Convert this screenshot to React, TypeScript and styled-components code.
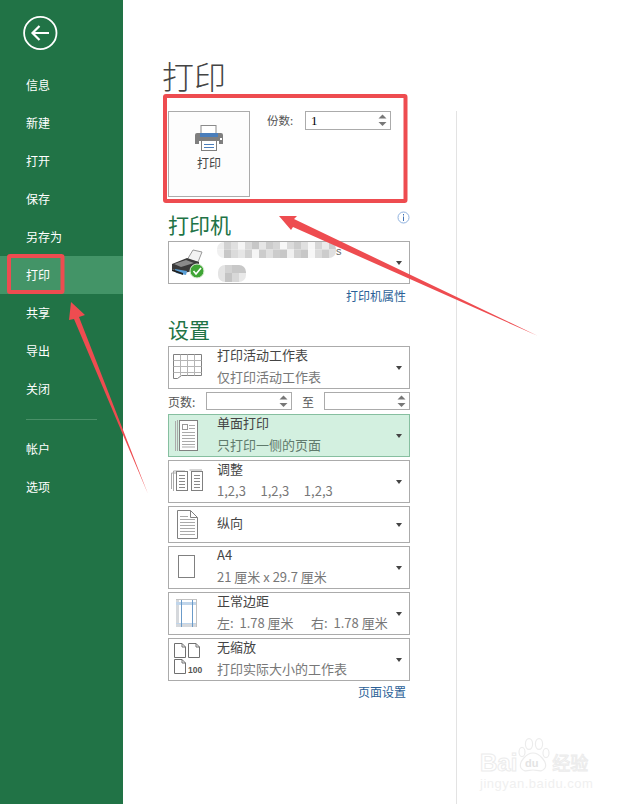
import React from "react";
import styled, { createGlobalStyle } from "styled-components";

const Global = createGlobalStyle`
  html, body { margin: 0; padding: 0; background: #fff; overflow: hidden; }
  body { font-family: "Noto Sans CJK SC", "Noto Sans", sans-serif; font-size: 12px; color: #444; }
  * { box-sizing: border-box; }
`;

const Page = styled.div`
  position: relative; width: 626px; height: 804px; display: flex; overflow: hidden; background: #fff;
`;
const Sidebar = styled.nav`
  width: 123px; height: 804px; background: #217346; flex: none; display: flex; flex-direction: column;
`;
const BackButton = styled.div`
  margin: 15px 0 15px 23px; width: 35px; height: 36px; display: flex; align-items: center; justify-content: center;
`;
const NavItem = styled.div<{ $active?: boolean }>`
  height: 38px; padding: 0 0 2px 26px; display: flex; align-items: center; color: #fff; font-size: 12px;
  background: ${(p) => (p.$active ? "#439467" : "transparent")};
`;
const NavDivider = styled.div`
  height: 1px; width: 71px; margin: 11px 0 10px 26px; background: #4a9068;
`;
const Column = styled.main`
  width: 242px; margin-left: 45px; flex: none; display: flex; flex-direction: column;
`;
const Title = styled.h1`
  margin: 51px 0 0 -6px; height: 60px; font-size: 32px; line-height: 48px; font-weight: 300; color: #444;
`;
const PrintRow = styled.section`
  display: flex; align-items: flex-start; height: 86px;
`;
const PrintButton = styled.div`
  width: 82px; height: 86px; border: 1px solid #ababab; background: #fdfdfd; display: flex; flex-direction: column; align-items: center; color: #444; font-size: 12px;
  padding-top: 13px; gap: 3px; line-height: 18px;
`;
const CopiesLabel = styled.span`
  margin-left: 17px; width: 38px; line-height: 19px; font-size: 11.5px; color: #555;
`;
const Spin = styled.div<{ $w: number; $h: number }>`
  position: relative; width: ${(p) => p.$w}px; height: ${(p) => p.$h}px; border: 1px solid #ababab; background: #fff; display: flex; align-items: center; padding-left: 5px;
  font-family: "Liberation Serif", serif; font-size: 13px; color: #000;
`;
const SpinArrows = styled.span`
  margin-left: auto; margin-right: 3px; display: flex;
`;
const HeadingRow = styled.div<{ $top: number }>`
  margin-top: ${(p) => p.$top}px; height: 30px; display: flex; justify-content: space-between; align-items: flex-start;
`;
const Heading = styled.h2`
  margin: -2px 0 0; font-size: 21px; line-height: 30px; font-weight: 400; color: #217346;
`;
const InfoMark = styled.span`
  margin-top: 0; display: flex;
`;
const Option = styled.div<{ $h?: number; $on?: boolean }>`
  flex: none; height: ${(p) => p.$h ?? 43}px; border: 1px solid ${(p) => (p.$on ? "#86bfa0" : "#ababab")}; background: ${(p) => (p.$on ? "#d3f0e0" : "#fff")};
  display: grid; grid-template-columns: 48px 1fr 20px; align-items: center;
`;
const IconCell = styled.div`
  display: flex; height: 100%; align-items: flex-start;
`;
const OptionText = styled.div`
  display: flex; flex-direction: column; justify-content: center; height: 100%; min-width: 0; white-space: pre;
`;
const OptionTitle = styled.div`
  font-size: 13px; line-height: 20px; height: 20px; margin-top: -4px; color: #444;
`;
const OptionSub = styled.div<{ $on?: boolean }>`
  font-size: 13px; line-height: 20px; height: 20px; margin-top: 2px; color: ${(p) => (p.$on ? "#5f7a6c" : "#777")};
`;
const Caret = styled.span`
  justify-self: start; margin-left: 7px; width: 0; height: 0; border-left: 3.5px solid transparent; border-right: 3.5px solid transparent; border-top: 4px solid #444;
`;
const LinkRow = styled.div<{ $h: number }>`
  height: ${(p) => p.$h}px; display: flex; align-items: center; justify-content: flex-end; padding: 0 4px 2px 0; font-size: 12px; color: #2b5f97;
`;
const PagesRow = styled.div`
  margin: 3px 0 4px; height: 18px; display: grid; grid-template-columns: 38px 86px 32px 86px; align-items: center; font-size: 12px; color: #555;
`;
const ToLabel = styled.span`
  text-align: center;
`;
const Stack = styled.div`
  display: flex; flex-direction: column; gap: 3px;
`;
const VerticalRule = styled.div`
  margin: 111px 0 0 46px; width: 1px; height: 693px; background: #e3e3e3; flex: none;
`;
const Overlay = styled.svg`
  position: absolute; left: 0; top: 0; pointer-events: none;
`;
const Watermark = styled.div`
  position: absolute; left: 480px; top: 737px; width: 125px;
`;
const WatermarkMain = styled.div`
  display: flex; align-items: flex-end; height: 36px; font-family: "Liberation Sans", sans-serif; font-size: 24px; line-height: 20px; font-weight: 700;
  color: #fff; -webkit-text-stroke: 1px #ececec;
`;
const WatermarkCn = styled.span`
  font-family: "Noto Sans CJK SC", sans-serif; font-size: 18px; line-height: 22px; margin-left: 1px; font-weight: 400;
`;
const WatermarkUrl = styled.div`
  font-family: "Liberation Sans", sans-serif; font-size: 13px; line-height: 17px; margin-top: 2px; letter-spacing: 0.5px; color: #f0f0f0;
`;
const MosaicWrap = styled.div`
  position: relative; height: 41px;
`;
const MosaicS = styled.span`
  position: absolute; left: 119px; top: 1px; font-size: 11px; line-height: 16px; color: #666; font-family: "Liberation Sans", sans-serif;
`;

const SpinGlyph = () => (
  <SpinArrows>
    <svg width="9" height="13" viewBox="0 0 9 13"><path d="M4.5 0.5 8.5 4.5H0.5Z M0.5 8H8.5L4.5 12Z" fill="#777" /></svg>
  </SpinArrows>
);

const line = "#808080";
const SheetIcon = () => (
  <svg width="48" height="41" viewBox="0 0 48 41" fill="none" stroke={line}>
    <path d="M4.5 7.5H32.5V28.5H12.5L8.5 31.5H4.5Z" />
    <path d="M4.5 13.5H32.5M4.5 19.5H32.5M4.5 25.5H32.5M11.5 7.5V28.5M18.5 7.5V28.5M25.5 7.5V28.5" stroke="#b5b5b5" />
  </svg>
);
const OneSideIcon = () => (
  <svg width="48" height="41" viewBox="0 0 48 41" fill="none" stroke={line}>
    <path d="M6.5 6V36M8.5 5V36" stroke="#aaa" />
    <rect x="10.5" y="5.5" width="18" height="30" fill="#fff" />
    <rect x="13.5" y="9.5" width="5" height="5" stroke="#999" />
    <path d="M20 10.5H26M20 13.5H26M13 17.5H26M13 20.5H26M13 23.5H26M13 26.5H26M13 29.5H26M13 32H26" stroke="#aaa" />
  </svg>
);
const CollatePage: React.FC<{ x: number; w: number }> = ({ x, w }) => (
  <g>
    <rect x={x + 0.5} y="10.5" width={w} height="19" fill="#fff" stroke={line} />
    <path d={`M${x + 3} 14.5H${x + w - 2}M${x + 3} 17.5H${x + w - 2}M${x + 3} 20.5H${x + w - 2}M${x + 3} 23.5H${x + w - 2}M${x + 3} 26.5H${x + w - 2}`} stroke="#8a8a8a" />
  </g>
);
const CollateIcon = () => (
  <svg width="48" height="41" viewBox="0 0 48 41" fill="none">
    <path d="M2.5 28V12H14M4.5 30V10H16" stroke="#aaa" />
    <path d="M20.5 9H33" stroke="#aaa" />
    <CollatePage x={7} w={11} />
    <CollatePage x={22} w={11} />
  </svg>
);
const PortraitIcon = () => (
  <svg width="48" height="35" viewBox="0 0 48 35" fill="none" stroke={line}>
    <path d="M8.5 3.5H21.5L28.5 10.5V31.5H8.5Z" />
    <path d="M21.5 3.5V10.5H28.5" />
    <path d="M11 9.5H19M11 12.5H26M11 15.5H26M11 18.5H26M11 21.5H26M11 24.5H26M11 27.5H26" stroke="#aaa" />
  </svg>
);
const PaperIcon = () => (
  <svg width="48" height="41" viewBox="0 0 48 41" fill="none" stroke={line}>
    <rect x="9.5" y="8.5" width="16" height="22" />
  </svg>
);
const MarginIcon = () => (
  <svg width="48" height="41" viewBox="0 0 48 41" fill="none">
    <rect x="7" y="6" width="21" height="28" fill="#fff" />
    <path d="M8.5 6V34M7 32.5H28" stroke="#d5d8dc" strokeWidth="3" />
    <path d="M7 10.5H28" stroke="#c0d5ea" strokeWidth="3" />
    <path d="M7 30.5H28" stroke="#c0d5ea" />
    <path d="M12.5 6V34M23.5 6V34" stroke="#6b9bc9" />
    <path d="M27.5 6V34M7 6.5H28" stroke="#c2c2c2" />
  </svg>
);
const Sheet: React.FC<{ x: number; y: number }> = ({ x, y }) => (
  <path d={`M${x + 0.5} ${y + 0.5}H${x + 8}L${x + 11.5} ${y + 4}V${y + 14.5}H${x + 0.5}Z M${x + 8} ${y + 0.5}V${y + 4}H${x + 11.5}`} stroke="#707070" fill="#fff" />
);
const NoScaleIcon = () => (
  <svg width="48" height="41" viewBox="0 0 48 41" fill="none">
    <Sheet x={5} y={4} />
    <Sheet x={19} y={4} />
    <Sheet x={5} y={20} />
    <text x="19" y="34" fontFamily="Liberation Sans, sans-serif" fontSize="8.5" fontWeight="700" fill="#555">100</text>
  </svg>
);

const blocksA = [0.93,0.82,0.88,0.96,0.85,0.78,0.9,0.8,0.84,0.97,0.86,0.8,0.88,0.97,0.84,0.92,0.8];
const blocksB = [0.94,0.78,0.86,0.9,0.82,0.96,0.8,0.88,0.8,0.78,0.94,0.82,0.78,0.97,0.86,0.8,0.88];
const grey = (v: number) => { const c = Math.round(v * 255); return `rgb(${c},${c},${c})`; };
const PrinterBlur = () => (
  <MosaicWrap>
    <svg width="48" height="41" viewBox="0 0 48 41" style={{ position: "absolute", left: -48, top: 0 }}>
      <path d="M18 18 24 8 33 10 29 20Z" fill="#f2f2f2" stroke="#999" />
      <path d="M3 22 18 16 30 20 30 28 14 31 3 27Z" fill="#3a3a3a" />
      <path d="M5 22 17 18 25 21 12 25Z" fill="#8a8a8a" />
      <path d="M6 27 18 29 17 33 7 31Z" fill="#5aa0d8" />
      <path d="M3 27 14 31 14 33 3 29Z" fill="#222" />
      <circle cx="28" cy="29" r="7" fill="#3fa535" stroke="#dff0da" />
      <path d="M24.5 29 27 32 32 26" fill="none" stroke="#fff" strokeWidth="1.6" />
    </svg>
    <svg width="119" height="41" viewBox="0 0 119 41">
      <clipPath id="blurA"><rect x="0" y="0" width="119" height="16" rx="7" /></clipPath>
      <clipPath id="blurB"><rect x="1" y="23" width="28" height="17" rx="7" /></clipPath>
      <g clipPath="url(#blurA)">
        {blocksA.map((v, i) => <rect key={i} x={i * 7} y="0" width="7" height="7.5" fill={grey(v)} />)}
        {blocksB.map((v, i) => <rect key={i} x={i * 7} y="7.5" width="7" height="8.5" fill={grey(v)} />)}
      </g>
      <g clipPath="url(#blurB)">
        <rect x="1" y="23" width="7" height="17" fill="#e4e4e4" />
        <rect x="8" y="23" width="7" height="8" fill="#d2d2d2" />
        <rect x="15" y="23" width="14" height="8" fill="#c8c8c8" />
        <rect x="8" y="31" width="7" height="9" fill="#c4c4c4" />
        <rect x="15" y="31" width="7" height="9" fill="#d8d8d8" />
        <rect x="22" y="31" width="7" height="9" fill="#e9e9e9" />
      </g>
    </svg>
    <MosaicS>s</MosaicS>
  </MosaicWrap>
);

type Opt = { icon: React.ReactNode; title: string; sub?: string; h?: number; on?: boolean };
const options: Opt[] = [
  { icon: <OneSideIcon />, title: "单面打印", sub: "只打印一侧的页面", on: true },
  { icon: <CollateIcon />, title: "调整", sub: "1,2,3     1,2,3     1,2,3" },
  { icon: <PortraitIcon />, title: "纵向", h: 37 },
  { icon: <PaperIcon />, title: "A4", sub: "21 厘米 x 29.7 厘米" },
  { icon: <MarginIcon />, title: "正常边距", sub: "左:  1.78 厘米      右:  1.78 厘米" },
  { icon: <NoScaleIcon />, title: "无缩放", sub: "打印实际大小的工作表" },
];

const OptionRow: React.FC<Opt> = ({ icon, title, sub, h, on }) => (
  <Option $h={h} $on={on}>
    <IconCell>{icon}</IconCell>
    <OptionText>
      <OptionTitle>{title}</OptionTitle>
      {sub && <OptionSub $on={on}>{sub}</OptionSub>}
    </OptionText>
    <Caret />
  </Option>
);

const nav1 = ["信息", "新建", "打开", "保存", "另存为", "打印", "共享", "导出", "关闭"];
const nav2 = ["帐户", "选项"];
const red = "#ee4c50";

export default function App() {
  return (
    <Page>
      <Global />
      <Sidebar>
        <BackButton>
          <svg width="35" height="36" viewBox="0 0 35 36" fill="none" stroke="#fff">
            <circle cx="17.3" cy="18" r="16.2" strokeWidth="1.8" />
            <path d="M10 18H26M16.5 11 9.5 18 16.5 25" strokeWidth="2.2" />
          </svg>
        </BackButton>
        {nav1.map((n) => <NavItem key={n} $active={n === "打印"}>{n}</NavItem>)}
        <NavDivider />
        {nav2.map((n) => <NavItem key={n}>{n}</NavItem>)}
      </Sidebar>
      <Column>
        <Title>打印</Title>
        <PrintRow>
          <PrintButton>
            <svg width="30" height="26" viewBox="0 0 30 26">
              <rect x="7" y="0.5" width="15" height="8" fill="#fff" stroke="#8a8a8a" />
              <path d="M3 8H27Q29 8 29 10V19H25V16H5V19H1V10Q1 8 3 8Z" fill="#7f7f7f" />
              <rect x="6" y="8" width="18" height="4" fill="#4a7ebb" />
              <rect x="26" y="13" width="2" height="2" fill="#fff" />
              <rect x="7.5" y="15.5" width="15" height="10" fill="#fff" stroke="#7f7f7f" />
              <path d="M10 19.5H20M10 22.5H20" stroke="#4a7ebb" />
            </svg>
            <span>打印</span>
          </PrintButton>
          <CopiesLabel>份数:</CopiesLabel>
          <Spin $w={86} $h={19}>1<SpinGlyph /></Spin>
        </PrintRow>
        <HeadingRow $top={14}>
          <Heading>打印机</Heading>
          <InfoMark>
            <svg width="13" height="13" viewBox="0 0 13 13" fill="none">
              <circle cx="6.5" cy="6.5" r="5.5" stroke="#8fb2e0" />
              <path d="M6.5 5.5V10M6.5 3V4.5" stroke="#3f72b5" />
            </svg>
          </InfoMark>
        </HeadingRow>
        <Option>
          <IconCell />
          <PrinterBlur />
          <Caret />
        </Option>
        <LinkRow $h={24}>打印机属性</LinkRow>
        <HeadingRow $top={8}>
          <Heading>设置</Heading>
        </HeadingRow>
        <OptionRow icon={<SheetIcon />} title="打印活动工作表" sub="仅打印活动工作表" />
        <PagesRow>
          <span>页数:</span>
          <Spin $w={86} $h={18}><SpinGlyph /></Spin>
          <ToLabel>至</ToLabel>
          <Spin $w={86} $h={18}><SpinGlyph /></Spin>
        </PagesRow>
        <Stack>
          {options.map((o) => <OptionRow key={o.title} {...o} />)}
        </Stack>
        <LinkRow $h={22}>页面设置</LinkRow>
      </Column>
      <VerticalRule />
      <Watermark>
        <WatermarkMain>
          Bai
          <svg width="34" height="36" viewBox="0 0 34 36" fill="none" stroke="#ececec" strokeWidth="1.2">
            <ellipse cx="12" cy="7" rx="3.6" ry="5.4" />
            <ellipse cx="22" cy="7" rx="3.6" ry="5.4" />
            <ellipse cx="5" cy="15" rx="3" ry="4.6" />
            <ellipse cx="29" cy="16" rx="3" ry="4.6" />
            <path d="M16 16C22 16 31 25 28 31 25 36 20 33 16 33 12 33 7 36 4 31 1 25 10 16 16 16Z" />
            <text x="8" y="30" fontFamily="Liberation Sans, sans-serif" fontSize="11" fontWeight="700" fill="#e4e4e4" stroke="none">du</text>
          </svg>
          <WatermarkCn>经验</WatermarkCn>
        </WatermarkMain>
        <WatermarkUrl>jingyan.baidu.com</WatermarkUrl>
      </Watermark>
      <Overlay width="626" height="804" viewBox="0 0 626 804" fill="none">
        <rect x="9" y="256" width="53.5" height="36" rx="1" stroke={red} strokeWidth="4" />
        <rect x="165" y="96" width="240.5" height="105" rx="1" stroke={red} strokeWidth="4" />
        <polygon points="279,216 297,216 294,219 538,336 293,227 291,230" fill={red} />
        <polygon points="71,302 85,315 79,317 148,494 74,319 69,320" fill={red} />
      </Overlay>
    </Page>
  );
}
